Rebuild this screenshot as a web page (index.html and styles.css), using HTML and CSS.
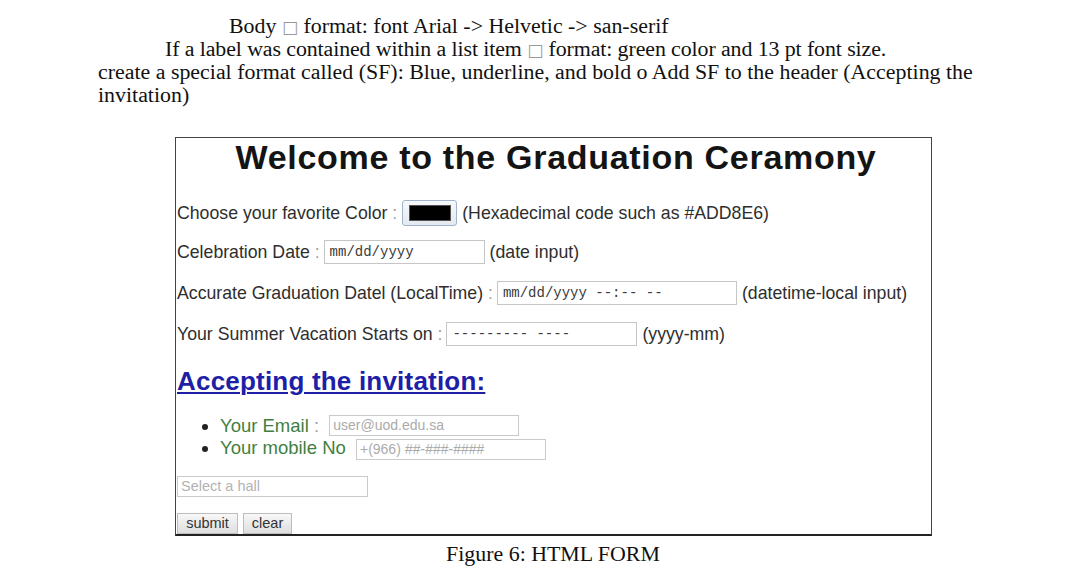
FILE: index.html
```html
<!DOCTYPE html>
<html>
<head>
<meta charset="utf-8">
<link rel="stylesheet" href="styles.css">
</head>
<body>
<div class="doc">
  <p class="l1">Body <span class="box">&#9633;</span> format: font Arial -&gt; Helvetic -&gt; san-serif</p>
  <p class="l2">If a label was contained within a list item <span class="box">&#9633;</span> format: green color and 13 pt font size.</p>
  <p class="l3">create a special format called (SF): Blue, underline, and bold o Add SF to the header (Accepting the invitation)</p>
</div>
<div class="frame">
  <h1 class="title">Welcome to the Graduation Ceramony</h1>
  <div class="row r1">
    <span class="lbl">Choose your favorite Color <span class="col">:</span></span>
    <span class="colorbox"><span class="swatch"></span></span>
    <span class="note">(Hexadecimal code such as #ADD8E6)</span>
  </div>
  <div class="row r2">
    <span class="lbl">Celebration Date <span class="col">:</span></span>
    <span class="field f-date">mm/dd/yyyy</span>
    <span class="note">(date input)</span>
  </div>
  <div class="row r3">
    <span class="lbl">Accurate Graduation Datel (LocalTime) <span class="col">:</span></span>
    <span class="field f-dt">mm/dd/yyyy --:-- --</span>
    <span class="note">(datetime-local input)</span>
  </div>
  <div class="row r4">
    <span class="lbl">Your Summer Vacation Starts on <span class="col">:</span></span>
    <span class="field f-month">--------- ----</span>
    <span class="note">(yyyy-mm)</span>
  </div>
  <h2 class="sf">Accepting the invitation:</h2>
  <ul class="list">
    <li><span class="green">Your Email <span class="col">:</span></span> <span class="small f-email">user@uod.edu.sa</span></li>
    <li><span class="green">Your mobile No</span> <span class="small f-mobile">+(966) <i>##-###-####</i></span></li>
  </ul>
  <div class="hall"><span class="small f-hall">Select a hall</span></div>
  <div class="btns"><span class="btn b-sub">submit</span><span class="btn b-clr">clear</span></div>
</div>
<p class="caption">Figure 6: HTML FORM</p>
</body>
</html>
```
FILE: styles.css
```css
html, body { margin: 0; padding: 0; background: #fff; }
body { font-family: "Liberation Serif", "Times New Roman", serif; color: #111; width: 1080px; height: 584px; overflow: hidden; }

.doc { padding: 14px 0 0 98px; font-size: 21.9px; line-height: 23px; }
.doc p { margin: 0; height: 23px; }
.doc .l1 { padding-left: 131px; }
.doc .l2 { padding-left: 67px; letter-spacing: -0.1px; }
.doc .l3 { width: 900px; height: auto; }
.box { color: #999; font-family: "DejaVu Sans", sans-serif; font-size: 17px; line-height: 1px; }

.frame {
  margin: 31px 0 0 175px;
  width: 755px;
  height: 396px;
  border: 1px solid #444;
  border-bottom: 2px solid #222;
  font-family: "Liberation Sans", Arial, sans-serif;
  color: #2e2e2e;
  font-size: 17.7px;
  display: flex;
  flex-direction: column;
}
.title { margin: 0; padding-left: 5px; font-size: 34px; letter-spacing: 0.7px; line-height: 38px; font-weight: bold; text-align: center; color: #141414; }

.row { display: flex; align-items: center; height: 26px; padding-left: 1px; }
.r1 { margin-top: 24px; }
.r2 { margin-top: 13px; }
.r3 { margin-top: 15px; }
.r4 { margin-top: 15px; }
.lbl { white-space: nowrap; }
.col { color: #a0a0a0; }
.note { margin-left: 5px; white-space: nowrap; }

.colorbox {
  margin-left: 5px;
  width: 55px; height: 26px;
  box-sizing: border-box;
  border: 1px solid #9fb3cf;
  border-radius: 3px;
  background: linear-gradient(#f6f8fb, #e4e9f0);
  display: flex; align-items: center; justify-content: center;
}
.swatch { width: 40px; height: 14px; background: #000; border: 1px solid #555; }

.field {
  margin-left: 4px;
  height: 24px;
  border: 1px solid #c6c6c6;
  box-sizing: border-box;
  font-family: "Liberation Mono", "Courier New", monospace;
  font-size: 14px;
  color: #3a3a3a;
  display: flex; align-items: center;
  padding-left: 5px;
  white-space: pre;
}
.f-date { width: 161px; }
.f-dt { width: 240px; }
.f-month { width: 191px; }

.sf { margin: 19px 0 0 1px; font-size: 26px; letter-spacing: 0.2px; line-height: 30px; font-weight: bold; color: #1e1ea6; text-decoration: underline; text-decoration-thickness: 2px; text-underline-offset: 2px; }

.list { margin: 19px 0 0; padding-left: 44px; list-style: disc; color: #222; }
.list li { height: 22px; line-height: 22px; font-size: 18.5px; }
.list .small { margin-left: 5px; }
.green { color: #3f7f3f; }
.small {
  display: inline-block;
  vertical-align: middle;
  box-sizing: border-box;
  height: 21px;
  border: 1px solid #cacaca;
  font-size: 14px;
  line-height: 19px;
  padding-left: 3px;
  color: #ababab;
}
.small i { font-style: italic; }
.f-email { width: 190px; margin-top: -4px; }
.f-mobile { width: 190px; }

.hall { margin-top: 17px; padding-left: 1px; }
.f-hall { width: 191px; font-size: 14.5px; color: #b3b3b3; vertical-align: top; }

.btns { margin-top: auto; display: flex; gap: 5px; padding-left: 1px; }
.btn {
  height: 21px; box-sizing: border-box;
  border: 1px solid #bdbdbd;
  background: linear-gradient(#f8f8f8, #dedede);
  font-size: 14.5px; line-height: 19px;
  color: #333;
  text-align: center;
}
.b-sub { width: 61px; }
.b-clr { width: 49px; }

.caption { margin: 6px 0 0; text-align: center; font-size: 21.9px; line-height: 24px; padding-left: 26px; }
```
